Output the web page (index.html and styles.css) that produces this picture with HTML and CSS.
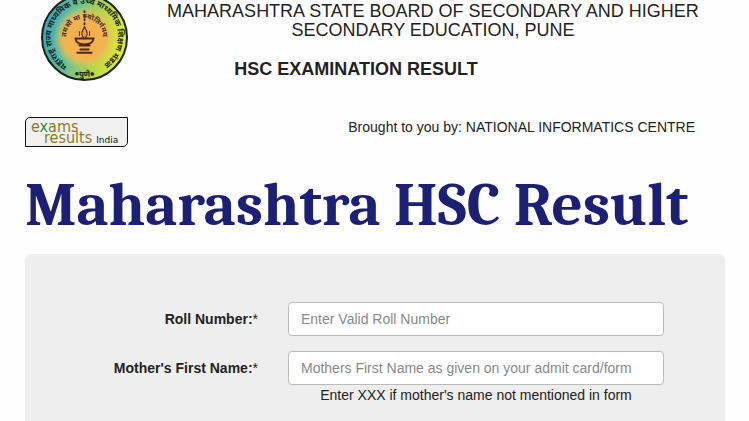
FILE: index.html
```
<!DOCTYPE html>
<html lang="en">
<head>
<meta charset="UTF-8">
<meta name="viewport" content="width=device-width, initial-scale=1.0">
<title>Maharashtra HSC Result</title>
<link rel="stylesheet" href="styles.css">
</head>
<body>
<div class="container">
<header class="header">
<svg class="emblem" viewBox="0 6 86 80" role="img" aria-label="Maharashtra State Board">
<defs>
<linearGradient id="ring" x1="0" y1="0.4" x2="1" y2="0.6">
<stop offset="0" stop-color="#36a5c0"/>
<stop offset="0.35" stop-color="#6cbf91"/>
<stop offset="0.65" stop-color="#b5d649"/>
<stop offset="1" stop-color="#f2ea28"/>
</linearGradient>
<radialGradient id="sun">
<stop offset="0" stop-color="#f5a94c"/>
<stop offset="0.7" stop-color="#f0b650"/>
<stop offset="1" stop-color="#dfca62" stop-opacity="0"/>
</radialGradient>
<path id="arcTop" d="M26 71 A33 33 0 1 1 60 71"/>
<path id="arcBottom" d="M18 73 A39 39 0 0 0 68 73"/>
<path id="arcMotto" d="M30 55 A18 18 0 1 1 56 55"/>
</defs>
<circle cx="43" cy="43" r="42" fill="url(#ring)" stroke="#15251b" stroke-width="2"/>
<circle cx="43" cy="43" r="31" fill="url(#sun)"/>
<text class="emblem-text"><textPath href="#arcTop">महाराष्ट्र राज्य माध्यमिक व उच्च माध्यमिक शिक्षण मंडळ</textPath></text>
<text class="emblem-text" text-anchor="middle"><textPath href="#arcBottom" startOffset="50%">●पुणे●</textPath></text>
<text class="emblem-motto" text-anchor="middle"><textPath href="#arcMotto" startOffset="50%">तमसो मा ज्योतिर्गमय</textPath></text>
<g fill="none" stroke="#4b2b1d" stroke-width="2" stroke-linecap="round">
<path d="M43 17v17" stroke-dasharray="1 3"/>
<path d="M38 37v4M48 37v4" stroke-width="1"/>
<path d="M34 44c1 8 17 8 18 0M35 44h16M38 51h10M39 55h8M36 58h14"/>
</g>
<path d="M43 33c4 5 3 9 0 11c-3-2-4-6 0-11z" fill="#e9a03f" stroke="#4b2b1d"/>
</svg>
<div class="board">
<h1>MAHARASHTRA STATE BOARD OF SECONDARY AND HIGHER SECONDARY EDUCATION, PUNE</h1>
<h2>HSC EXAMINATION RESULT</h2>
</div>
</header>
<div class="credits">
<a class="exams-logo" href="#">
<span class="exams">e<span class="tick">x</span>ams</span>
<span class="results">results</span>
<span class="india">India</span>
</a>
<p>Brought to you by: NATIONAL INFORMATICS CENTRE</p>
</div>
<div class="title">Maharashtra HSC Result</div>
<form class="result-form">
<label for="roll">Roll Number:<span>*</span></label>
<input type="text" id="roll" placeholder="Enter Valid Roll Number" required>
<label for="mother">Mother's First Name:<span>*</span></label>
<input type="text" id="mother" placeholder="Mothers First Name as given on your admit card/form" aria-describedby="hint" required>
<p class="hint" id="hint">Enter XXX if mother's name not mentioned in form</p>
</form>
</div>
</body>
</html>
```
FILE: styles.css
```
* {
    box-sizing: border-box;
    margin: 0;
    padding: 0;
}
body {
    background: #fefefe;
    color: #222;
    font-family: "Liberation Sans", Arial, sans-serif;
    font-size: 14px;
    line-height: 20px;
}
.container {
    max-width: 1170px;
    margin: 0 auto;
    padding: 0 24px 0 25px;
}
.header {
    display: flex;
    align-items: flex-start;
    padding-left: 16px;
}
.emblem {
    flex: none;
    width: 87px;
    height: 81px;
}
.emblem-text {
    font-family: "Noto Sans Devanagari", "Noto Sans", sans-serif;
    font-size: 8px;
    font-weight: bold;
    fill: #17261a;
}
.emblem-motto {
    font-family: "Noto Sans Devanagari", "Noto Sans", sans-serif;
    font-size: 7px;
    font-weight: bold;
    fill: #4b2b1d;
}
.board {
    flex: 1;
    padding: 2px 3px 0 16px;
    text-align: center;
}
.board h1 {
    font-size: 18px;
    font-weight: normal;
    line-height: 19px;
}
.board h2 {
    margin-top: 19px;
    padding-right: 154px;
    font-size: 18px;
    line-height: 20px;
}
.credits {
    display: flex;
    justify-content: space-between;
    align-items: flex-start;
    margin-top: 36px;
    padding-right: 30px;
}
.exams-logo {
    display: grid;
    grid-template-columns: auto auto;
    align-content: start;
    justify-content: start;
    width: 103px;
    height: 30px;
    padding: 3px 5px 0;
    border: 1px solid #111;
    border-radius: 5px 0;
    background: #f1f1f0;
    color: #8b7a2b;
    font-family: "DejaVu Sans Condensed", "DejaVu Sans", sans-serif;
    font-size: 16px;
    text-decoration: none;
}
.exams {
    grid-column: 1 / 3;
    line-height: 11px;
}
.tick {
    color: #2f8c3c;
}
.results {
    padding-left: 13px;
    line-height: 11px;
}
.india {
    padding-left: 4px;
    color: #111;
    font-family: "DejaVu Sans", sans-serif;
    font-size: 9px;
    line-height: 16px;
}
.title {
    margin-top: 24px;
    color: #1b2074;
    font-family: Cambria, Caladea, "DejaVu Serif Condensed", serif;
    font-size: 61px;
    font-weight: bold;
    line-height: 68px;
    white-space: nowrap;
}
.result-form {
    display: grid;
    grid-template-columns: 233fr 376fr;
    column-gap: 30px;
    align-items: center;
    margin-top: 15px;
    padding: 48px 61px 24px 0;
    border-radius: 6px;
    background: #eee;
}
.result-form label {
    font-weight: bold;
    text-align: right;
}
.result-form label span {
    font-weight: normal;
}
.result-form input {
    width: 100%;
    height: 34px;
    padding: 6px 12px;
    border: 1px solid #bbb;
    border-radius: 4px;
    background: #fff;
    color: #555;
    font: inherit;
}
#mother {
    margin: 15px 0 0;
}
label[for="mother"] {
    padding-top: 15px;
}
.result-form input::placeholder {
    color: #888;
    opacity: 1;
}
.hint {
    grid-column: 2;
    text-align: center;
}
```
